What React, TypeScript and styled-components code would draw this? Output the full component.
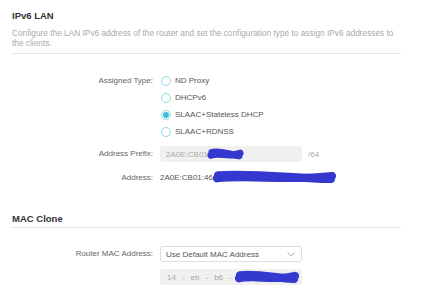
import styled, { createGlobalStyle } from "styled-components";

const GlobalStyle = createGlobalStyle`
  html, body {
    margin: 0;
    padding: 0;
    background: #fff;
    font-family: "Liberation Sans", Arial, sans-serif;
  }
`;

const Page = styled.div`
  width: 389px;
  padding: 10px 0 0 12px;
`;

const SectionTitle = styled.div`
  font-size: 9.5px;
  line-height: 12px;
  font-weight: bold;
  color: #333;
`;

const Description = styled.div`
  margin-top: 6px;
  font-size: 8.3px;
  line-height: 10px;
  color: #aaa;
`;

const Divider = styled.div<{ $gap: number }>`
  margin-top: ${(p) => p.$gap}px;
  border-bottom: 1px solid #e6e6e6;
`;

const Form = styled.div<{ $top: number }>`
  margin-top: ${(p) => p.$top}px;
  display: flex;
  flex-direction: column;
`;

const Row = styled.div<{ $h: number; $mt?: number }>`
  display: grid;
  grid-template-columns: 141px 1fr;
  column-gap: 7px;
  align-items: start;
  margin-top: ${(p) => p.$mt || 0}px;
  min-height: ${(p) => p.$h}px;
`;

const Label = styled.div<{ $h: number }>`
  text-align: right;
  font-size: 8px;
  line-height: ${(p) => p.$h}px;
  color: #666;
`;

const Control = styled.div`
  display: flex;
  flex-direction: column;
`;

const RadioRow = styled.div`
  display: flex;
  align-items: center;
  gap: 4px;
  height: 17px;
  margin-left: 1px;
  font-size: 8px;
  color: #555;
`;

const RadioCircle = styled.span<{ $checked?: boolean }>`
  box-sizing: border-box;
  width: 10px;
  height: 10px;
  border-radius: 50%;
  border: 1px solid #8edbe5;
  display: flex;
  align-items: center;
  justify-content: center;

  &::after {
    content: "";
    display: ${(p) => (p.$checked ? "block" : "none")};
    width: 6px;
    height: 6px;
    border-radius: 50%;
    background: #36c2d3;
  }
`;

const InputLine = styled.div`
  display: flex;
  align-items: center;
  gap: 6px;
`;

const Field = styled.div<{ $filled?: boolean }>`
  position: relative;
  box-sizing: border-box;
  width: 142px;
  height: 16px;
  border-radius: 3px;
  background: ${(p) => (p.$filled ? "#f0f0f0" : "#fff")};
  border: 1px solid ${(p) => (p.$filled ? "#f0f0f0" : "#dedede")};
  display: flex;
  align-items: center;
  padding: 0 5px;
  font-size: 8px;
  color: ${(p) => (p.$filled ? "#aaa" : "#555")};
`;

const Suffix = styled.span`
  font-size: 8px;
  color: #aaa;
`;

const PlainValue = styled.div`
  position: relative;
  font-size: 8px;
  line-height: 16px;
  color: #555;
`;

const Chevron = styled.svg`
  position: absolute;
  right: 6px;
  top: 5px;
`;

const MacParts = styled.div`
  display: flex;
  gap: 6px;
  margin-left: 1px;
`;

const Scribble = styled.svg`
  position: absolute;
  overflow: visible;
`;

const SecondTitle = styled(SectionTitle)`
  margin-top: 27px;
`;

const Blot = ({ left, top, w, h }: { left: number; top: number; w: number; h: number }) => (
  <Scribble style={{ left, top }} width={w} height={h} viewBox={`0 0 ${w} ${h}`}>
    <path
      d={`M4 ${h * 0.55} C ${w * 0.3} ${h * 0.3}, ${w * 0.6} ${h * 0.75}, ${w - 4} ${h * 0.4}
         M5 ${h * 0.35} C ${w * 0.35} ${h * 0.2}, ${w * 0.65} ${h * 0.55}, ${w - 5} ${h * 0.6}`}
      stroke="#3438cf"
      strokeWidth={h * 0.55}
      strokeLinecap="round"
      fill="none"
    />
  </Scribble>
);

export default function App() {
  return (
    <>
      <GlobalStyle />
      <Page>
        <SectionTitle>IPv6 LAN</SectionTitle>
        <Description>
          Configure the LAN IPv6 address of the router and set the configuration type to assign IPv6 addresses to
          the clients.
        </Description>
        <Divider $gap={5} />

        <Form $top={18}>
          <Row $h={68}>
            <Label $h={17}>Assigned Type:</Label>
            <Control>
              <RadioRow><RadioCircle />ND Proxy</RadioRow>
              <RadioRow><RadioCircle />DHCPv6</RadioRow>
              <RadioRow><RadioCircle $checked />SLAAC+Stateless DHCP</RadioRow>
              <RadioRow><RadioCircle />SLAAC+RDNSS</RadioRow>
            </Control>
          </Row>
          <Row $h={16} $mt={6}>
            <Label $h={16}>Address Prefix:</Label>
            <InputLine>
              <Field $filled>
                2A0E:CB01
                <Blot left={46} top={1} w={37} h={13} />
              </Field>
              <Suffix>/64</Suffix>
            </InputLine>
          </Row>
          <Row $h={16} $mt={8}>
            <Label $h={16}>Address:</Label>
            <PlainValue>
              2A0E:CB01:46
              <Blot left={53} top={0} w={123} h={15} />
            </PlainValue>
          </Row>
        </Form>

        <SecondTitle>MAC Clone</SecondTitle>
        <Divider $gap={2} />

        <Form $top={18}>
          <Row $h={16}>
            <Label $h={16}>Router MAC Address:</Label>
            <Field>
              Use Default MAC Address
              <Chevron width="8" height="5" viewBox="0 0 8 5">
                <path d="M0.5 0.5 L4 4 L7.5 0.5" stroke="#b5b5b5" strokeWidth="1" fill="none" />
              </Chevron>
            </Field>
          </Row>
          <Row $h={16} $mt={7}>
            <Label $h={16}></Label>
            <Field $filled>
              <MacParts>
                <span>14</span><span>-</span><span>eb</span><span>-</span><span>b6</span><span>-</span>
              </MacParts>
              <Blot left={74} top={0} w={64} h={15} />
            </Field>
          </Row>
        </Form>
      </Page>
    </>
  );
}
